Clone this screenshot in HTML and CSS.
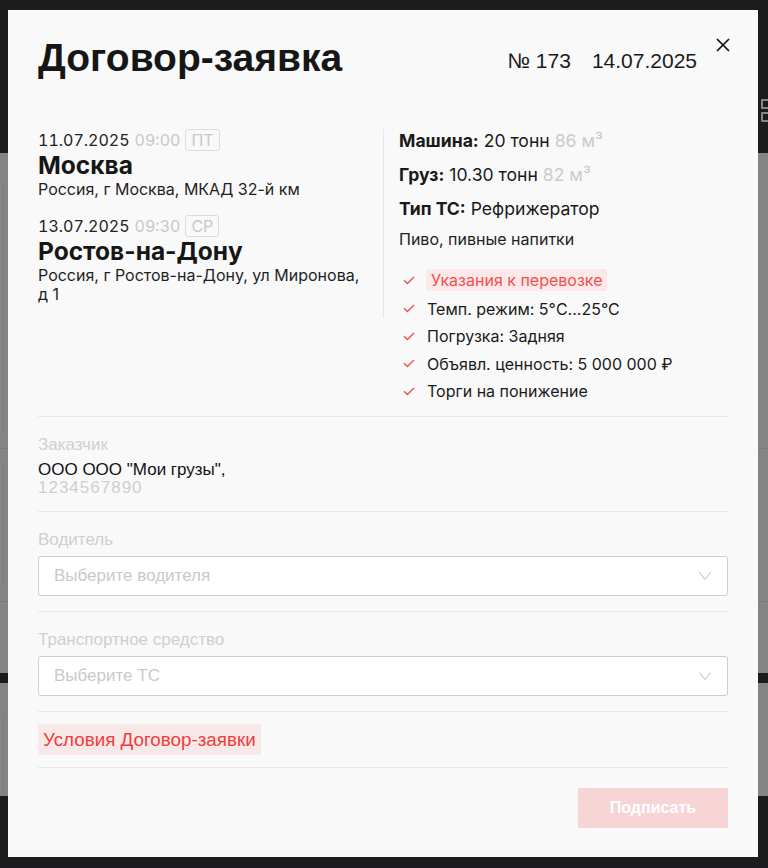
FILE: index.html
```html
<!DOCTYPE html>
<html lang="ru">
<head>
<meta charset="utf-8">
<title>Договор-заявка</title>
<link rel="stylesheet" href="styles.css">
</head>
<body>
<div class="page">
  <div class="page-top">
    <span class="sq"></span>
    <span class="sq"></span>
  </div>
  <div class="page-panel">
    <div class="panel-cell"><div class="vline v1"></div></div>
    <div class="panel-cell c2"><div class="vline v2"></div></div>
  </div>
  <div class="page-band"></div>
  <div class="page-panel p2">
    <div class="vline v3"></div>
  </div>
</div>

<div class="overlay">
  <div class="modal">
    <button class="close" aria-label="Закрыть">
      <svg width="14" height="14" viewBox="0 0 14 14"><path d="M1 1L13 13M13 1L1 13" stroke="#111" stroke-width="1.7" fill="none"/></svg>
    </button>

    <header class="head">
      <h1 class="title">Договор-заявка</h1>
      <div class="meta">
        <span>№ 173</span>
        <span>14.07.2025</span>
      </div>
    </header>

    <section class="top">
      <div class="route">
        <div class="stop">
          <div class="when">
            <span class="date">11.07.2025</span>
            <span class="time">09:00</span>
            <span class="day">ПТ</span>
          </div>
          <div class="city">Москва</div>
          <div class="addr">Россия, г Москва, МКАД 32-й км</div>
        </div>
        <div class="stop">
          <div class="when">
            <span class="date">13.07.2025</span>
            <span class="time">09:30</span>
            <span class="day">СР</span>
          </div>
          <div class="city">Ростов-на-Дону</div>
          <div class="addr">Россия, г Ростов-на-Дону, ул Миронова, д 1</div>
        </div>
      </div>

      <div class="specs">
        <div class="spec"><b>Машина:</b> 20 тонн <span class="muted">86 м³</span></div>
        <div class="spec"><b>Груз:</b> 10.30 тонн <span class="muted">82 м³</span></div>
        <div class="spec"><b>Тип ТС:</b> Рефрижератор</div>
        <div class="cargo">Пиво, пивные напитки</div>
        <ul class="checks">
          <li><svg class="ck" width="12" height="9" viewBox="0 0 12 9"><path d="M1 4.2L4.4 7.6L11 1" stroke="#f05252" stroke-width="1.4" fill="none"/></svg><span class="pill">Указания к перевозке</span></li>
          <li><svg class="ck" width="12" height="9" viewBox="0 0 12 9"><path d="M1 4.2L4.4 7.6L11 1" stroke="#f05252" stroke-width="1.4" fill="none"/></svg><span>Темп. режим: 5°C...25°C</span></li>
          <li><svg class="ck" width="12" height="9" viewBox="0 0 12 9"><path d="M1 4.2L4.4 7.6L11 1" stroke="#f05252" stroke-width="1.4" fill="none"/></svg><span>Погрузка: Задняя</span></li>
          <li><svg class="ck" width="12" height="9" viewBox="0 0 12 9"><path d="M1 4.2L4.4 7.6L11 1" stroke="#f05252" stroke-width="1.4" fill="none"/></svg><span>Объявл. ценность: 5 000 000 ₽</span></li>
          <li><svg class="ck" width="12" height="9" viewBox="0 0 12 9"><path d="M1 4.2L4.4 7.6L11 1" stroke="#f05252" stroke-width="1.4" fill="none"/></svg><span>Торги на понижение</span></li>
        </ul>
      </div>
    </section>

    <section class="sec customer">
      <div class="label">Заказчик</div>
      <div class="cust-name">ООО ООО "Мои грузы",</div>
      <div class="cust-inn">1234567890</div>
    </section>

    <section class="sec field">
      <div class="label">Водитель</div>
      <div class="select">
        <span>Выберите водителя</span>
        <svg width="12" height="8" viewBox="0 0 12 8"><path d="M0.5 0.5L6 7.5L11.5 0.5" stroke="#b8b8b8" stroke-width="1" fill="none"/></svg>
      </div>
    </section>

    <section class="sec field">
      <div class="label">Транспортное средство</div>
      <div class="select">
        <span>Выберите ТС</span>
        <svg width="12" height="8" viewBox="0 0 12 8"><path d="M0.5 0.5L6 7.5L11.5 0.5" stroke="#b8b8b8" stroke-width="1" fill="none"/></svg>
      </div>
    </section>

    <section class="sec terms">
      <a class="terms-link" href="#">Условия Договор-заявки</a>
    </section>

    <footer class="foot">
      <button class="sign">Подписать</button>
    </footer>
  </div>
</div>
</body>
</html>
```

FILE: styles.css
```css
* { box-sizing: border-box; }

body {
  margin: 0;
  background: #1c1c1e;
  font-family: "Liberation Sans", Arial, sans-serif;
  color: #1a1a1a;
}

/* background page under the overlay */
.page-top {
  height: 153px;
  padding: 99px 0 0 761px;
  display: flex;
  flex-direction: column;
  gap: 3px;
}
.sq {
  display: block;
  width: 11px;
  height: 10px;
  border: 2px solid #858585;
  border-radius: 1px;
}
.page-panel {
  height: 520px;
  background: #858585;
}
.panel-cell {
  padding: 30px 0 15px 3px;
  border-bottom: 1px solid #7a7a7a;
}
.panel-cell.c2 { padding-top: 14px; }
.vline { border-left: 1px solid #7b7b7b; }
.v1 { height: 250px; }
.v2 { height: 123px; }
.page-band { height: 10px; }
.page-panel.p2 {
  height: 113px;
  padding: 30px 0 0 3px;
}
.v3 { height: 83px; }

/* overlay + modal */
.overlay {
  position: fixed;
  inset: 0;
  padding: 10px 8px;
}
.modal {
  position: relative;
  width: 750px;
  background: #f9f9f9;
  padding: 28px 30px 29px;
}
.close {
  position: absolute;
  top: 28px;
  right: 28px;
  width: 14px;
  height: 14px;
  padding: 0;
  border: 0;
  background: none;
  display: block;
}
.close svg { display: block; }

.head {
  display: flex;
  align-items: flex-start;
  justify-content: space-between;
  margin-bottom: 51px;
}
.title {
  margin: 0;
  font-size: 39px;
  line-height: 40px;
  font-weight: 700;
  color: #161616;
}
.meta {
  display: flex;
  gap: 21px;
  margin: 11px 31px 0 0;
  font-size: 21px;
  line-height: 24px;
  color: #1a1a1a;
}

/* top section */
.top {
  display: grid;
  grid-template-columns: 346px 1fr;
  padding-bottom: 15px;
  font-family: Inter, "Liberation Sans", sans-serif;
}
.route {
  align-self: start;
  border-right: 1px solid #e6e6e6;
  padding: 0 15px 13px 0;
}
.stop + .stop { margin-top: 15px; }
.when {
  display: flex;
  align-items: center;
  gap: 5px;
  height: 22px;
  font-size: 16px;
  line-height: 20px;
  font-variant-numeric: tabular-nums;
}
.date { color: #222; }
.time { color: #c8c8c8; }
.day {
  height: 22px;
  border: 1px solid #dcdcdc;
  border-radius: 3px;
  padding: 0 5px;
  color: #c8c8c8;
  font-size: 16px;
  display: flex;
  align-items: center;
}
.city {
  font-size: 24.5px;
  line-height: 28px;
  font-weight: 700;
  color: #161616;
}
.addr {
  margin-top: 1px;
  font-size: 16px;
  line-height: 19.5px;
  color: #1f1f1f;
}

.specs { padding-left: 15px; }
.spec {
  font-size: 17.6px;
  line-height: 24px;
  color: #1a1a1a;
}
.spec + .spec { margin-top: 10px; }
.spec b { font-weight: 700; }
.muted { color: #cbcbcb; }
.cargo {
  margin-top: 8px;
  font-size: 16px;
  line-height: 20px;
  color: #222;
}
.checks {
  list-style: none;
  margin: 20px 0 0;
  padding: 0;
  display: flex;
  flex-direction: column;
  gap: 7.5px;
}
.checks li {
  display: flex;
  align-items: center;
  font-size: 16px;
  line-height: 20px;
  color: #1a1a1a;
}
.ck {
  flex: none;
  margin: 0 12px 0 4px;
}
.pill {
  margin-left: -1px;
  padding: 1px 5px;
  background: #fbe8e8;
  color: #f25050;
  border-radius: 2px;
}

/* lower sections */
.sec { border-top: 1px solid #e8e8e8; }
.label {
  font-size: 17px;
  line-height: 18px;
  color: #cfcfcf;
}
.customer { padding: 19px 0 14px; }
.customer .label { margin-bottom: 7px; }
.cust-name {
  font-size: 17px;
  line-height: 18px;
  color: #111;
}
.cust-inn {
  font-size: 17px;
  line-height: 18px;
  letter-spacing: 1px;
  color: #cfcfcf;
}
.field { padding: 19px 0 15px; }
.field .label { margin-bottom: 7px; }
.select {
  height: 40px;
  background: #fff;
  border: 1px solid #cdcdcd;
  border-radius: 3px;
  padding: 0 16px 0 15px;
  display: flex;
  align-items: center;
  justify-content: space-between;
  font-size: 17px;
  line-height: 38px;
  color: #c9c9c9;
}
.select svg { display: block; }

.terms { padding: 12px 0; }
.terms-link {
  display: inline-block;
  padding: 0 5px;
  background: #f8e9e9;
  color: #f23c3c;
  font-size: 18.8px;
  line-height: 31px;
  text-decoration: none;
}

.foot {
  border-top: 1px solid #e8e8e8;
  padding-top: 20px;
  display: flex;
  justify-content: flex-end;
}
.sign {
  width: 150px;
  height: 40px;
  border: 0;
  border-radius: 0;
  background: #f7d5d5;
  color: #fff;
  font-family: "Liberation Sans", Arial, sans-serif;
  font-size: 16px;
  font-weight: 700;
}
```
